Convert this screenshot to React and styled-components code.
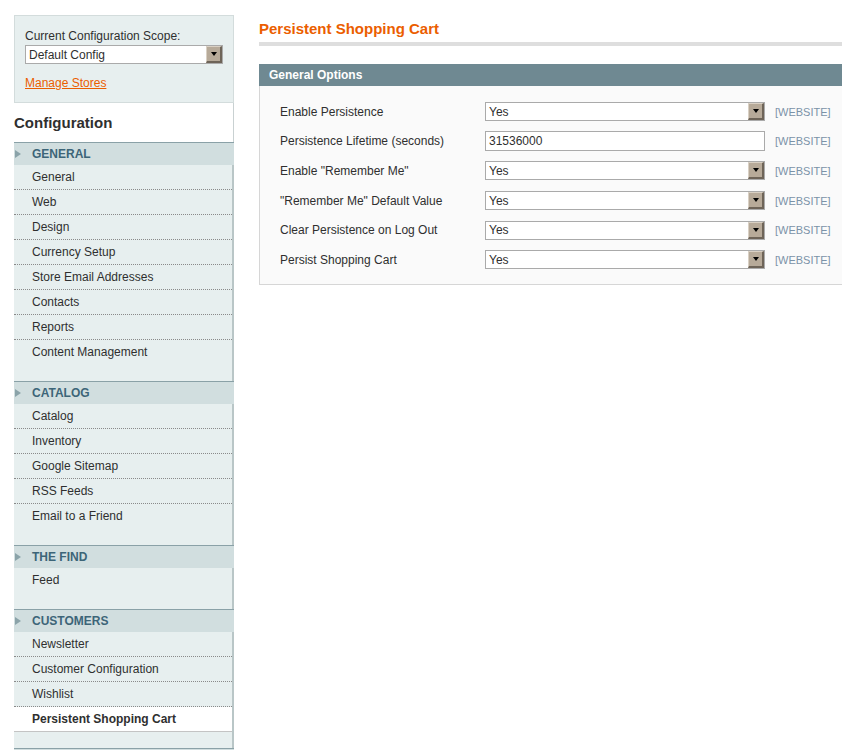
import React from 'react'
import styled, { createGlobalStyle } from 'styled-components'

const GlobalStyle = createGlobalStyle`
  html, body {
    margin: 0;
    padding: 0;
    background: #fff;
    overflow: hidden;
  }
  body {
    font-family: "Liberation Sans", Arial, sans-serif;
    font-size: 12px;
    color: #2f2f2f;
  }
`

const Page = styled.div`
  display: flex;
  align-items: flex-start;
  padding: 15px 0 0 14px;
  height: 735px;
`

const Sidebar = styled.div`
  width: 220px;
  flex-shrink: 0;
`

const ScopeBox = styled.div`
  background: #e7efef;
  border: 1px solid #d3dcdc;
  padding: 12px 10px 11px 10px;
`

const ScopeLabel = styled.div`
  line-height: 16px;
  margin-bottom: 1px;
`

const ManageLink = styled.a`
  display: block;
  margin-top: 11px;
  line-height: 16px;
  color: #eb5e00;
  text-decoration: underline;
`

const NavTitle = styled.h3`
  margin: 0;
  height: 39px;
  line-height: 40px;
  font-size: 15px;
  font-weight: bold;
  color: #2f2f2f;
  background: #fff;
  border-right: 1px solid #c9d1d2;
`

const SectionHead = styled.div`
  position: relative;
  height: 22px;
  line-height: 23px;
  border-top: 1px solid #8aa1a7;
  background: #d1dedf;
  padding-left: 18px;
  font-weight: bold;
  text-transform: uppercase;
  color: #3d6578;

  &::before {
    content: '';
    position: absolute;
    left: 1px;
    top: 7px;
    border-style: solid;
    border-width: 4px 0 4px 6px;
    border-color: transparent transparent transparent #8ba3a9;
  }
`

const Group = styled.ul`
  list-style: none;
  margin: 0;
  padding: 0 0 16px 0;
  background: #e7efef;
  border-right: 2px solid #b9c6c7;
`

const Item = styled.li`
  height: 24px;
  line-height: 25px;
  padding-left: 18px;
  border-bottom: 1px dotted ${p => (p.$last ? 'transparent' : '#8a8a8a')};
  background: ${p => (p.$active ? '#fff' : 'transparent')};
  font-weight: ${p => (p.$active ? 'bold' : 'normal')};
  color: #2f2f2f;
  ${p => p.$active && 'border-bottom: 1px solid #c4c4c4;'}
`

const Main = styled.div`
  margin-left: 25px;
  width: 620px;
  flex-shrink: 0;
`

const PageTitle = styled.h3`
  margin: 5px 0 0 0;
  line-height: 18px;
  padding-bottom: 4px;
  border-bottom: 4px solid #dedede;
  font-size: 15px;
  font-weight: bold;
  color: #eb5e00;
`

const BoxHead = styled.div`
  margin-top: 18px;
  height: 22px;
  line-height: 22px;
  padding-left: 10px;
  background: #6f8992;
  color: #fff;
  font-weight: bold;
`

const Fieldset = styled.div`
  background: #fafafa;
  border: 1px solid #d6d6d6;
  border-top: none;
  padding: 11px 0 9px 20px;
  display: grid;
  grid-template-columns: 195px 280px auto;
  grid-auto-rows: 29.6px;
  column-gap: 10px;
  align-items: center;
`

const Label = styled.div`
  color: #2f2f2f;
`

const Select = styled.div`
  box-sizing: border-box;
  height: 19px;
  border: 1px solid #aaa;
  background: #fff;
  display: flex;
  align-items: center;
  padding-left: 3px;
  font-size: 12px;
  color: #2f2f2f;
`

const Arrow = styled.span`
  box-sizing: border-box;
  margin-left: auto;
  width: 16px;
  height: 17px;
  background: #b7aa99;
  border-top: 1px solid #d9d0c4;
  border-left: 1px solid #d9d0c4;
  border-right: 2px solid #6e6458;
  border-bottom: 2px solid #6e6458;
  display: flex;
  align-items: center;
  justify-content: center;

  &::after {
    content: '';
    border-style: solid;
    border-width: 4px 3px 0 3px;
    border-color: #000 transparent transparent transparent;
  }
`

const TextInput = styled.div`
  box-sizing: border-box;
  height: 20px;
  border: 1px solid #aaa;
  background: #fff;
  padding-left: 3px;
  line-height: 18px;
  color: #2f2f2f;
`

const Scope = styled.div`
  font-size: 11px;
  color: #7a92a8;
`

const groups = [
  {
    title: 'General',
    items: ['General', 'Web', 'Design', 'Currency Setup', 'Store Email Addresses', 'Contacts', 'Reports', 'Content Management'],
  },
  {
    title: 'Catalog',
    items: ['Catalog', 'Inventory', 'Google Sitemap', 'RSS Feeds', 'Email to a Friend'],
  },
  { title: 'The Find', items: ['Feed'] },
  {
    title: 'Customers',
    items: ['Newsletter', 'Customer Configuration', 'Wishlist', 'Persistent Shopping Cart'],
  },
]

const fields = [
  { label: 'Enable Persistence', value: 'Yes' },
  { label: 'Persistence Lifetime (seconds)', value: '31536000', text: true },
  { label: 'Enable "Remember Me"', value: 'Yes' },
  { label: '"Remember Me" Default Value', value: 'Yes' },
  { label: 'Clear Persistence on Log Out', value: 'Yes' },
  { label: 'Persist Shopping Cart', value: 'Yes' },
]

export default function App() {
  return (
    <>
      <GlobalStyle />
      <Page>
        <Sidebar>
          <ScopeBox>
            <ScopeLabel>Current Configuration Scope:</ScopeLabel>
            <Select>
              Default Config
              <Arrow />
            </Select>
            <ManageLink href="#">Manage Stores</ManageLink>
          </ScopeBox>
          <NavTitle>Configuration</NavTitle>
          {groups.map(g => (
            <div key={g.title}>
              <SectionHead>{g.title}</SectionHead>
              <Group>
                {g.items.map((it, i) => (
                  <Item
                    key={it}
                    $last={i === g.items.length - 1}
                    $active={it === 'Persistent Shopping Cart'}
                  >
                    {it}
                  </Item>
                ))}
              </Group>
            </div>
          ))}
          {/* next section, cut off by the window */}
          <SectionHead />
        </Sidebar>
        <Main>
          <PageTitle>Persistent Shopping Cart</PageTitle>
          <BoxHead>General Options</BoxHead>
          <Fieldset>
            {fields.map(f => (
              <React.Fragment key={f.label}>
                <Label>{f.label}</Label>
                {f.text ? (
                  <TextInput>{f.value}</TextInput>
                ) : (
                  <Select>
                    {f.value}
                    <Arrow />
                  </Select>
                )}
                <Scope>[WEBSITE]</Scope>
              </React.Fragment>
            ))}
          </Fieldset>
        </Main>
      </Page>
    </>
  )
}
